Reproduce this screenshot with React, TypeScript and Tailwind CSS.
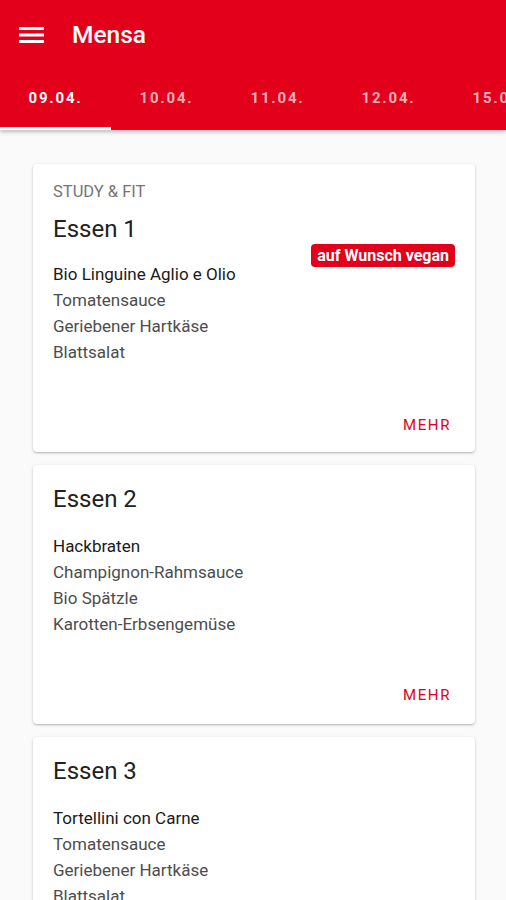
import React from 'react';

interface Meal {
  line?: string;
  title: string;
  badge?: string;
  items: string[];
}

const dates = ['09.04.', '10.04.', '11.04.', '12.04.', '15.04.'];

const meals: Meal[] = [
  {
    line: 'Study & Fit',
    title: 'Essen 1',
    badge: 'auf Wunsch vegan',
    items: ['Bio Linguine Aglio e Olio', 'Tomatensauce', 'Geriebener Hartkäse', 'Blattsalat'],
  },
  {
    title: 'Essen 2',
    items: ['Hackbraten', 'Champignon-Rahmsauce', 'Bio Spätzle', 'Karotten-Erbsengemüse'],
  },
  {
    title: 'Essen 3',
    items: ['Tortellini con Carne', 'Tomatensauce', 'Geriebener Hartkäse', 'Blattsalat'],
  },
];

const MealCard: React.FC<{ meal: Meal }> = ({ meal }) => (
  <div
    className={`bg-white rounded-[4px] shadow-[0_1px_3px_rgba(0,0,0,0.22),0_1px_1px_rgba(0,0,0,0.08)] px-5 pt-[18px] ${
      meal.line ? 'pb-[17px]' : 'pb-[19px]'
    }`}
  >
    {meal.line && (
      <div className="text-[16.5px] leading-[20px] text-[#757575] uppercase mb-3">{meal.line}</div>
    )}
    <div className={`text-[24px] leading-[30px] text-[#212121] ${meal.line ? '' : 'pt-px'}`}>{meal.title}</div>
    <div className={`flex items-start justify-between ${meal.line ? 'mt-[17px]' : 'mt-[19px]'}`}>
      <div className="flex flex-col">
        {meal.items.map((item, i) => (
          <span
            key={item + i}
            className={`text-[17px] leading-[26px] ${i === 0 ? 'text-[#1a1a1a]' : 'text-[#4d4d4d]'}`}
          >
            {item}
          </span>
        ))}
      </div>
      {meal.badge && (
        <span className="-mt-[17px] bg-[#e2001a] text-white text-[16px] font-bold leading-[23px] px-[6px] rounded-[4px] whitespace-nowrap">
          {meal.badge}
        </span>
      )}
    </div>
    <div className={`flex justify-end pr-1 ${meal.line ? 'mt-[50px]' : 'mt-12'}`}>
      <span className="text-[15px] leading-[20px] tracking-[1.6px] text-[#e2001a]">MEHR</span>
    </div>
  </div>
);

export default function App() {
  return (
    <div className="w-[506px] h-[900px] overflow-hidden bg-[#fafafa]" style={{ fontFamily: 'Roboto, "Noto Sans", sans-serif' }}>
      <header className="bg-[#e2001a] shadow-[0_2px_4px_rgba(0,0,0,0.25)] relative z-10">
        <div className="h-[70px] flex items-center">
          <button className="w-[72px] h-full flex items-center pl-[19px]">
            <svg width="25" height="18" viewBox="0 0 25 18" fill="none">
              <rect x="0" y="1" width="25" height="3" fill="#fff" />
              <rect x="0" y="7.5" width="25" height="3" fill="#fff" />
              <rect x="0" y="14" width="25" height="3" fill="#fff" />
            </svg>
          </button>
          <h1 className="text-white text-[24.5px] font-medium leading-none">Mensa</h1>
        </div>
        <div className="h-[60px] flex overflow-hidden">
          {dates.map((d, i) => (
            <div key={d} className="w-[111px] shrink-0 flex flex-col">
              <div
                className={`flex-1 flex items-center justify-center text-[15px] font-bold tracking-[1.8px] ${
                  i === 0 ? 'text-white' : 'text-white/70'
                }`}
              >
                {d}
              </div>
              <div className={`h-[3px] ${i === 0 ? 'bg-white' : 'bg-transparent'}`} />
            </div>
          ))}
        </div>
      </header>
      <main className="pl-[33px] pr-[31px] pt-[34px] flex flex-col gap-[13px]">
        {meals.map((m) => (
          <MealCard key={m.title} meal={m} />
        ))}
      </main>
    </div>
  );
}
